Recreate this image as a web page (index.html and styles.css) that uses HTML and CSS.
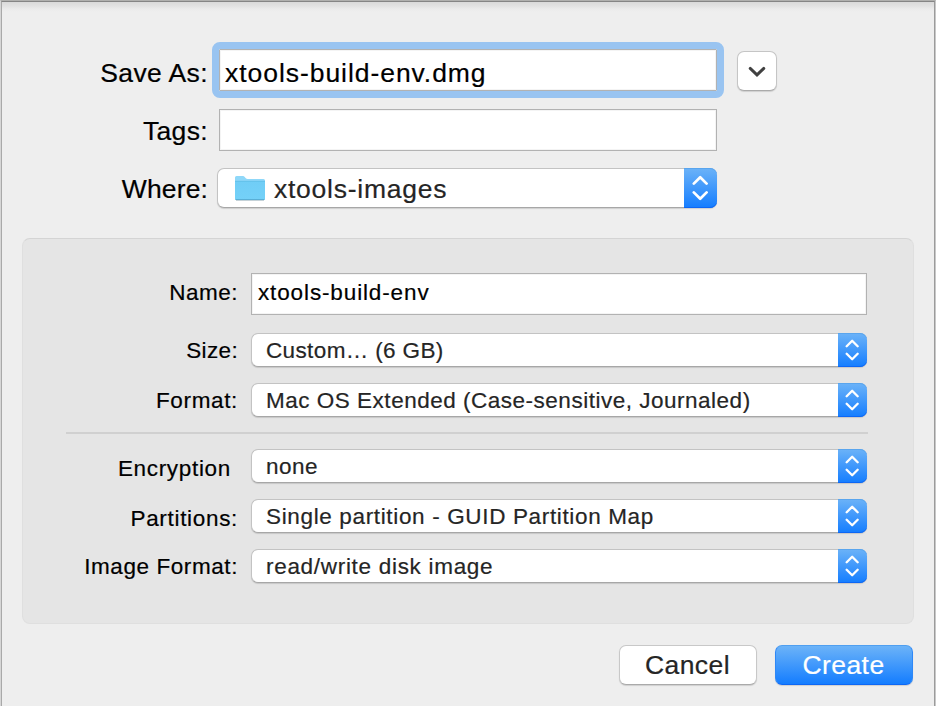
FILE: index.html
```html
<!DOCTYPE html>
<html lang="en">
<head>
<meta charset="utf-8">
<title>Save disk image</title>
<link rel="stylesheet" href="styles.css">
</head>
<body>
<svg width="0" height="0" class="defs">
  <symbol id="updown" viewBox="0 0 16 28"><path d="M1.800 9.600 8.200 3.200l6.400 6.400M1.800 18.400 8.200 24.800l6.400-6.400" fill="none" stroke="#fff" stroke-width="2.700" stroke-linecap="round" stroke-linejoin="round"/></symbol>
</svg>
<main class="sheet">
  <form class="destination">
    <div class="row save-row">
      <label class="label"><span class="t-save">Save As:</span></label>
      <div class="field focused"><span class="t-file">xtools-build-env.dmg</span></div>
      <button type="button" class="disclosure"><svg width="20" height="14" viewBox="0 0 20 14"><path d="M3.200 3.400 10 9.900 16.800 3.400" fill="none" stroke="#404040" stroke-width="2.900" stroke-linecap="round"/></svg></button>
    </div>
    <div class="row tags-row">
      <label class="label"><span class="t-tags">Tags:</span></label>
      <div class="field"></div>
    </div>
    <div class="row where-row">
      <label class="label"><span class="t-where">Where:</span></label>
      <div class="popup large">
        <svg class="folder" width="32" height="28" viewBox="0 0 32 28">
          <defs><linearGradient id="fg" x1="0" y1="0" x2="0" y2="1"><stop offset="0" stop-color="#70cdf6"/><stop offset="1" stop-color="#74d1f8"/></linearGradient></defs>
          <path d="M1 3.500Q1 2 2.500 2H9q1 0 1.700 1l1.100 1.200q.7.800 1.800.800H29.500Q31 5 31 6.500V10H1z" fill="#8fd8f9"/>
          <path d="M1 7H31V24.500Q31 26 29.500 26h-27Q1 26 1 24.500z" fill="url(#fg)"/>
          <path d="M1 7.300H31" stroke="#5fbce6" stroke-width=".8"/>
          <path d="M1.500 25.500H30.500" stroke="#59afd6"/>
          <path d="M2 26.500H30" stroke="#c5d2d8"/>
        </svg>
        <span class="value t-folder">xtools-images</span>
        <span class="stepper"><svg width="16" height="28"><use href="#updown"/></svg></span>
      </div>
    </div>
  </form>
  <section class="panel">
    <div class="row name-row">
      <label class="label"><span class="t-name">Name:</span></label>
      <div class="field"><span class="t-volume">xtools-build-env</span></div>
    </div>
    <div class="row">
      <label class="label"><span class="t-size">Size:</span></label>
      <div class="popup"><span class="value t-custom">Custom… (6 GB)</span><span class="stepper"><svg width="14" height="24"><use href="#updown"/></svg></span></div>
    </div>
    <div class="row">
      <label class="label"><span class="t-format">Format:</span></label>
      <div class="popup"><span class="value t-mac">Mac OS Extended (Case-sensitive, Journaled)</span><span class="stepper"><svg width="14" height="24"><use href="#updown"/></svg></span></div>
    </div>
    <hr class="divider">
    <div class="row">
      <label class="label lower no-colon"><span class="t-enc">Encryption</span></label>
      <div class="popup"><span class="value t-none">none</span><span class="stepper"><svg width="14" height="24"><use href="#updown"/></svg></span></div>
    </div>
    <div class="row">
      <label class="label lower"><span class="t-parts">Partitions:</span></label>
      <div class="popup"><span class="value t-single">Single partition - GUID Partition Map</span><span class="stepper"><svg width="14" height="24"><use href="#updown"/></svg></span></div>
    </div>
    <div class="row">
      <label class="label"><span class="t-image">Image Format:</span></label>
      <div class="popup"><span class="value t-read">read/write disk image</span><span class="stepper"><svg width="14" height="24"><use href="#updown"/></svg></span></div>
    </div>
  </section>
  <footer class="actions">
    <button type="button" class="button"><span>Cancel</span></button>
    <button type="button" class="button primary"><span>Create</span></button>
  </footer>
</main>
</body>
</html>
```
FILE: styles.css
```css
* { box-sizing: border-box; }

body {
  margin: 0;
  width: 936px;
  height: 706px;
  overflow: hidden;
  font-family: "Liberation Sans", Arial, sans-serif;
  color: #000;
  -webkit-text-stroke: .2px;
  border: solid;
  border-width: 1px 1px 0;
  border-color: #b0b0ae #c8c8c8 transparent #d6d6d6;
}

.defs { display: block; height: 0; }

.sheet {
  height: 705px;
  border-style: solid;
  border-color: #858585 #9b9b9b transparent #a9a9a9;
  border-width: 1px 1px 0;
  background: linear-gradient(#dadada, #e2e2e2 4px, #ebebeb 7px, #eee 10px);
}

.row { display: flex; align-items: center; }
.label { text-align: right; flex: none; white-space: nowrap; }
.label span, .field span, .value { display: inline-block; white-space: nowrap; }

.destination { padding-top: 47px; font-size: 26.5px; line-height: 30px; }
.destination .label { width: 206px; margin-right: 11px; }
.save-row { height: 42px; }
.tags-row { margin-top: 18px; height: 42px; }
.where-row { margin-top: 17px; height: 40px; }
.destination .where-row .label { margin-right: 9px; }
.save-row .label { padding-top: 5px; }
.tags-row .label { padding-top: 2px; }
.where-row .label { padding-top: 1px; }

.t-save { letter-spacing: .4px; }
.t-file { letter-spacing: .95px; }
.t-tags { letter-spacing: .35px; }
.t-where { letter-spacing: .13px; }
.t-folder { letter-spacing: .75px; }
.t-name { letter-spacing: .5px; }
.t-volume { letter-spacing: .87px; }
.t-size { letter-spacing: .35px; }
.t-custom { letter-spacing: .37px; }
.t-format { letter-spacing: .65px; }
.t-mac { letter-spacing: .51px; }
.t-enc { letter-spacing: .68px; }
.t-none { letter-spacing: .45px; }
.t-parts { letter-spacing: .68px; }
.t-single { letter-spacing: .65px; }
.t-image { letter-spacing: .58px; }
.t-read { letter-spacing: .7px; }

.field {
  width: 498px;
  height: 42px;
  padding: 6px;
  border: 1px solid #b2b2b2;
  background: #fff;
  box-shadow: inset 0 0 0 1px #f4f4f4;
}
.save-row .field { padding: 8px 5px; }
.save-row .focused { outline: 7px solid #99c4f1; border-radius: 1px; }

.disclosure {
  width: 40px;
  height: 40px;
  margin: 2px 0 0 20px;
  padding: 2px 0 0;
  display: grid;
  place-items: center;
  border: 1px solid #c5c5c5;
  border-bottom-color: #aaa;
  border-radius: 7px;
  background: #fff;
  box-shadow: 0 1px 1px #0002;
}

.popup {
  display: flex;
  align-items: center;
  width: 616px;
  height: 34px;
  border: 1px solid #c3c3c3;
  border-bottom-color: #a7a7a7;
  border-right: 0;
  border-radius: 7px;
  background: #fff;
  box-shadow: 0 1px 1px #0002;
  color: #252525;
}
.popup .value { padding-left: 14px; padding-top: 1px; }
.popup.large { width: 500px; height: 40px; }
.folder { margin-left: 16px; flex: none; }
.popup.large .value { padding-left: 8px; padding-top: 2px; }

.stepper {
  align-self: stretch;
  flex: none;
  margin: -1px 0 -1px auto;
  width: 29px;
  padding-right: 1px;
  display: grid;
  place-items: center;
  border-radius: 0 7px 7px 0;
  background: linear-gradient(#6cb3f8, #147dff);
  box-shadow: inset 0 1px #59a5ee, inset 0 -1px #0d67f5;
}
.large .stepper { width: 33px; }
.stepper svg { display: block; }

.panel {
  width: 892px;
  height: 386px;
  margin: 30px 0 0 20px;
  padding-top: 34px;
  border: 1px solid #dfdfdf;
  border-top-color: #d4d4d4;
  border-radius: 8px;
  background: #e5e5e5;
  font-size: 22.5px;
  line-height: 26px;
}
.panel .label { width: 215px; margin-right: 13px; padding-top: 1px; }
.panel .field { width: 616px; }
.panel .row + .row { margin-top: 16px; }
.panel .name-row + .row { margin-top: 18px; }
.panel .label.lower { padding-top: 5px; }
.panel .label.no-colon { padding-right: 7px; }
.panel .name-row .label { padding: 0 0 3px; }

.divider {
  width: 802px;
  height: 2px;
  margin: 15px 0 15px 43px;
  border: 0;
  background: #d0d0d0;
}

.actions {
  display: flex;
  justify-content: flex-end;
  gap: 18px;
  padding: 21px 21px 0 0;
}
.button {
  width: 138px;
  height: 40px;
  padding: 0 1px 0 0;
  border: 1px solid #c8c8c8;
  border-bottom-color: #aaa;
  border-radius: 7px;
  background: #fff;
  box-shadow: 0 1px 1px #0002;
  color: #252525;
  font: 26.5px/36px "Liberation Sans", Arial, sans-serif;
  letter-spacing: .45px;
}
.button.primary {
  border-color: #4f9ff0 #2e88f7 #0d67f5;
  background: linear-gradient(#6cb3f8, #147dff);
  color: #fff;
}
```
